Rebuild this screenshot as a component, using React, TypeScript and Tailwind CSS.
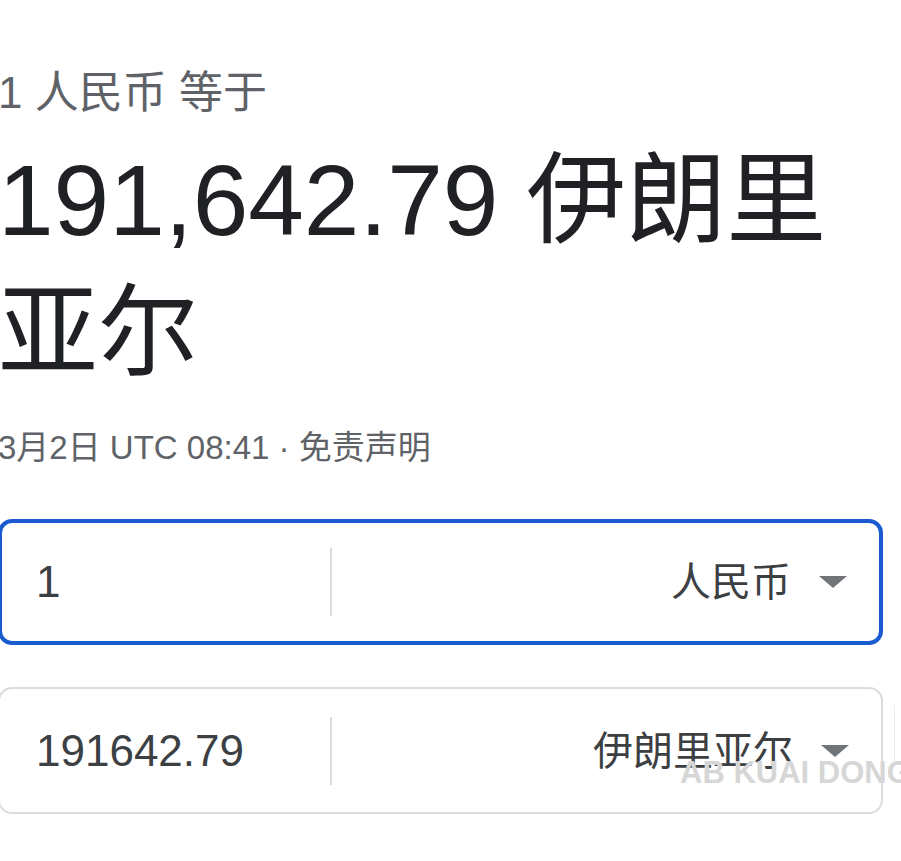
const FONT = "font-['Liberation_Sans','Noto_Sans_CJK_SC',sans-serif]";

function Caret() {
  return (
    <svg width="28" height="12" viewBox="0 0 28 12" className="shrink-0">
      <polygon points="0,0 28,0 14,12" fill="#70757a" />
    </svg>
  );
}

function CurrencyRow({ value, currency, focused }: { value: string; currency: string; focused?: boolean }) {
  return (
    <div
      className={`flex items-center rounded-[14px] bg-white ${
        focused ? 'h-[126px] border-[4px] border-[#1a5bcf] pl-[34px]' : 'h-[127px] border-2 border-[#dadce0] pl-[36px]'
      }`}
    >
      <div className="w-[294px] shrink-0 text-[44px] text-[#3c4043] leading-none">{value}</div>
      <div className="w-[2px] h-[68px] bg-[#dadce0] shrink-0" />
      <div className="flex-1 flex items-center justify-end gap-[28px] pr-[32px]">
        <span className="text-[40px] text-[#3c4043] leading-none">{currency}</span>
        <Caret />
      </div>
    </div>
  );
}

export default function App() {
  return (
    <div className={`w-[901px] h-[861px] bg-white overflow-hidden relative ${FONT}`}>
      <div className="pt-[67px] pr-[18px] -ml-[2px]">
        <div className="text-[44px] leading-[52px] text-[#5f6368]">1 人民币 等于</div>
        <div className="text-[100px] leading-[132px] text-[#202124] mt-[15px]">191,642.79 伊朗里亚尔</div>
        <div className="text-[33px] leading-[40px] text-[#5f6368] mt-[30px]">3月2日 UTC 08:41 · 免责声明</div>
        <div className="mt-[51px] flex flex-col gap-[42px]">
          <CurrencyRow value="1" currency="人民币" focused />
          <CurrencyRow value="191642.79" currency="伊朗里亚尔" />
        </div>
      </div>
      <div className="absolute left-[894px] top-[705px] w-[1px] h-[56px] bg-[#ededed]" />
      <div className="absolute left-[680px] top-[757px] text-[31px] font-bold text-[#d6d6d6] whitespace-nowrap leading-none">
        AB KUAI DONG
      </div>
    </div>
  );
}
